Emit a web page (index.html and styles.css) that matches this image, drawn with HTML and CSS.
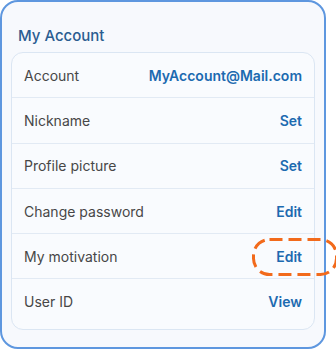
FILE: index.html
```html
<!DOCTYPE html>
<html lang="en">
<head>
    <meta charset="UTF-8">
    <meta name="viewport" content="width=device-width, initial-scale=1.0">
    <title>My Account</title>
    <link rel="stylesheet" href="styles.css">
</head>
<body>

<div class="card">
    <h2 class="title">My Account</h2>

    <div class="list">
        <div class="row">
            <span class="label">Account</span>
            <span class="value">MyAccount@Mail.com</span>
        </div>
        <div class="row">
            <span class="label">Nickname</span>
            <span class="value">Set</span>
        </div>
        <div class="row">
            <span class="label">Profile picture</span>
            <span class="value">Set</span>
        </div>
        <div class="row">
            <span class="label">Change password</span>
            <span class="value">Edit</span>
        </div>
        <div class="row">
            <span class="label">My motivation</span>
            <span class="value highlight">Edit
                <!-- markierung -->
                <svg class="mark" width="86" height="38" viewBox="0 0 86 38">
                    <rect x="1.5" y="1.5" width="83" height="35" rx="16" fill="none"
                          stroke="#f26a1b" stroke-width="3" stroke-dasharray="13 6"/>
                </svg>
            </span>
        </div>
        <div class="row">
            <span class="label">User ID</span>
            <span class="value">View</span>
        </div>
    </div>
</div>

</body>
</html>
```

FILE: styles.css
```css
body {
    margin: 0;
    background-color: #fff;
    font-family: Inter, "Noto Sans", sans-serif;
}
.card {
    width: 326px;
    height: 349px;
    box-sizing: border-box;
    border: 2px solid #5e97df;
    border-radius: 18px;
    background-color: #f7f9fd;
    padding: 0 9px;
}
.title {
    margin: 0;
    padding: 24px 0 0 7px;
    height: 26px;
    font-size: 15px;
    font-weight: 500;
    color: #2b5d91;
}
.list {
    background-color: #f9fbfe;
    border: 1px solid #dbe6f3;
    border-radius: 12px;
    padding-bottom: 5px;
}
.row {
    display: flex;
    justify-content: space-between;
    align-items: center;
    height: 44.3px;
    padding: 0 12px;
    border-bottom: 1px solid #e2eaf4;
}
.row:last-child {
    border-bottom: none;
}
.label {
    font-size: 14px;
    color: #474747;
}
.value {
    font-size: 14px;
    font-weight: 600;
    color: #1c6ab0;
}
.highlight {
    position: relative;
}
.mark {
    position: absolute;
    left: -24px;
    top: -10px;
}
```
